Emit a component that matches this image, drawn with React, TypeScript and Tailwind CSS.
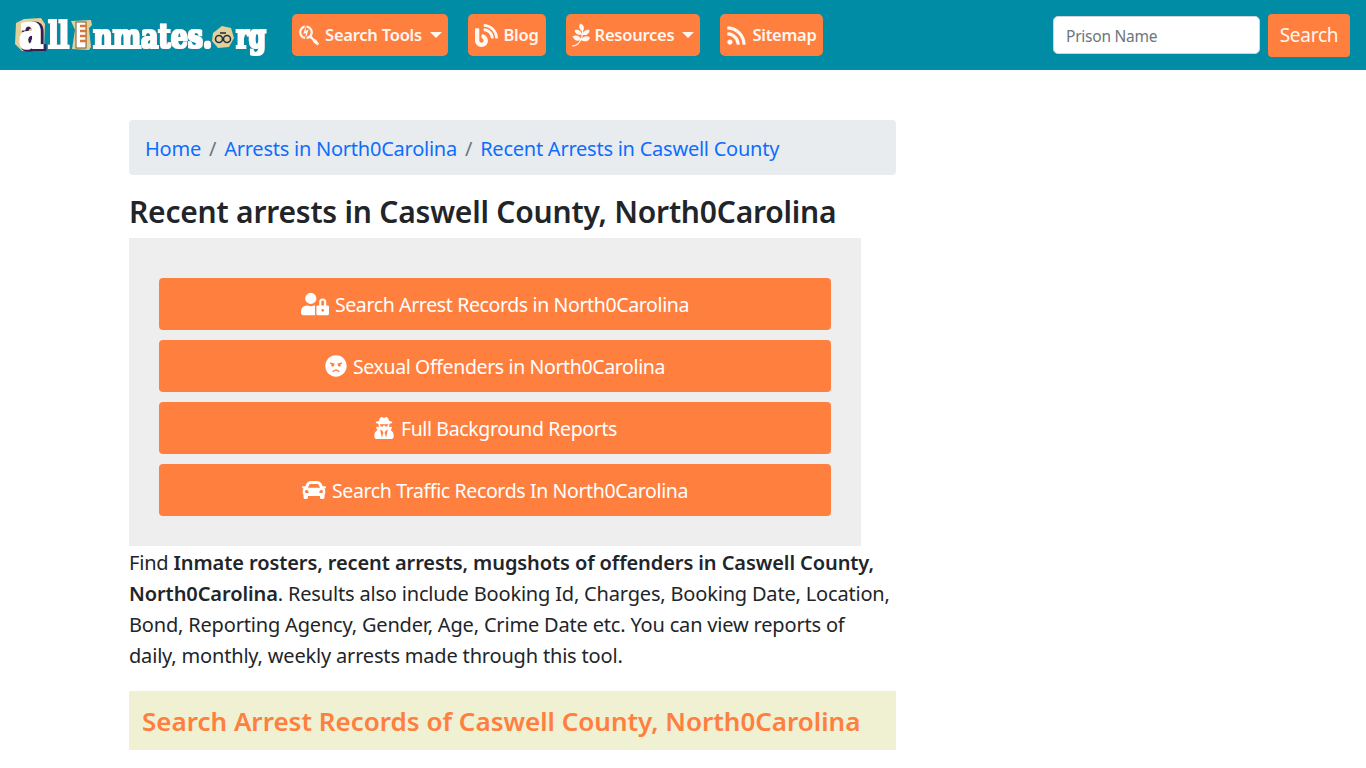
import { FaAngry, FaBlog, FaCar, FaPagelines, FaRss, FaSearchengin, FaUserLock, FaUserSecret } from 'react-icons/fa'
import type { ReactNode } from 'react'

function Logo() {
  return (
    <svg width="254" height="42" viewBox="0 0 254 42" className="shrink-0">
      <defs>
        <filter id="fat" x="-10%" y="-10%" width="120%" height="120%">
          <feMorphology in="SourceGraphic" operator="dilate" radius="0.7" result="body" />
          <feMorphology in="SourceAlpha" operator="dilate" radius="1.3" result="grown" />
          <feFlood floodColor="#5a3d1c" />
          <feComposite in2="grown" operator="in" result="edge" />
          <feMerge>
            <feMergeNode in="edge" />
            <feMergeNode in="body" />
          </feMerge>
        </filter>
        <filter id="fatA" x="-20%" y="-20%" width="140%" height="140%">
          <feMorphology in="SourceGraphic" operator="dilate" radius="1" result="body" />
          <feMorphology in="SourceAlpha" operator="dilate" radius="1.6" result="grown" />
          <feOffset in="grown" dx="1.5" dy="0.5" result="moved" />
          <feFlood floodColor="#3b1a55" />
          <feComposite in2="moved" operator="in" result="edge" />
          <feMerge>
            <feMergeNode in="edge" />
            <feMergeNode in="body" />
          </feMerge>
        </filter>
      </defs>
      <path d="M2 9 L10 5 L27 4 L31 10 L30 36 L8 37 L1 30 Z" fill="#e2cf9a" />
      <path d="M57 7 L77 6 L78 11 L75 14 L77 33 L75 36 L58 35 L61 16 Z" fill="#e2cf9a" />
      <rect x="62" y="8" width="10" height="26" fill="#fff" stroke="#7a5a2c" strokeWidth="1" />
      <path d="M66 12 H73 M66 17 H73 M66 22 H73 M66 27 H73" stroke="#d9783c" strokeWidth="2.4" />
      <path d="M199 19 L208 12 L217 14 L220 24 L215 33 L204 34 L198 27 Z" fill="#e2cf9a" />
      <circle cx="205" cy="25" r="3.5" fill="none" stroke="#234" strokeWidth="1.6" />
      <circle cx="213" cy="25" r="3.5" fill="none" stroke="#234" strokeWidth="1.6" />
      <path d="M206 19 L212 19" stroke="#234" strokeWidth="1.6" />
      <g fontFamily="'DejaVu Serif', serif" fontWeight="700" fill="#ffffff">
        <text x="5" y="34" fontSize="48" textLength="24" lengthAdjust="spacingAndGlyphs" filter="url(#fatA)">a</text>
        <g filter="url(#fat)">
          <text x="34" y="34" fontSize="37" textLength="21" lengthAdjust="spacingAndGlyphs">ll</text>
          <text x="79" y="34" fontSize="34" textLength="119" lengthAdjust="spacingAndGlyphs">nmates.</text>
          <text x="222" y="34" fontSize="34" textLength="30" lengthAdjust="spacingAndGlyphs">rg</text>
        </g>
      </g>
    </svg>
  )
}

function NavButton({ icon, label, caret, w }: { icon: ReactNode; label: string; caret?: boolean; w: string }) {
  return (
    <a className={`flex h-[42px] items-center justify-center gap-[5px] rounded-[5px] bg-[#ff7f3f] text-[16.5px] font-semibold text-[#fff7f0] ${w}`}>
      {icon}
      <span className="pt-[1px]">{label}</span>
      {caret && <span className="ml-[3px] h-0 w-0 border-x-[6px] border-t-[6px] border-x-transparent border-t-[#fff7f0]" />}
    </a>
  )
}

function ActionButton({ icon, label }: { icon: ReactNode; label: string }) {
  return (
    <a className="flex h-[52px] items-center justify-center gap-[6px] rounded-[4px] bg-[#ff7f3f] text-[19.5px] tracking-[-0.019em] text-white">
      {icon}
      <span className="pt-[2px]">{label}</span>
    </a>
  )
}

export default function App() {
  return (
    <div className="min-h-[768px] overflow-hidden bg-white font-['Noto_Sans',sans-serif] tracking-[-0.015em] text-[#212529]">
      <nav className="flex h-[70px] items-center bg-[#008ca5] pl-[14px] pr-[16px]">
        <Logo />
        <div className="ml-[24px] flex gap-[20px]">
          <NavButton w="w-[156px]" icon={<FaSearchengin className="text-[22px]" />} label="Search Tools" caret />
          <NavButton w="w-[78px]" icon={<FaBlog className="text-[23px]" />} label="Blog" />
          <NavButton w="w-[134px]" icon={<FaPagelines className="-mx-[3px] text-[24px]" />} label="Resources" caret />
          <NavButton w="w-[103px]" icon={<FaRss className="text-[21px]" />} label="Sitemap" />
        </div>
        <div className="ml-auto flex items-center gap-[8px]">
          <input
            placeholder="Prison Name"
            className="h-[38px] w-[207px] rounded-[5px] border border-[#ced4da] bg-white px-[12px] pt-[2px] text-[15.5px] placeholder:text-[#6c757d]"
          />
          <a className="flex h-[43px] w-[82px] items-center justify-center rounded-[4px] bg-[#ff7f3f] text-[19px] text-[#fff7f0]">Search</a>
        </div>
      </nav>

      <main className="ml-[129px] w-[767px] pt-[50px]">
        <div className="flex h-[55px] items-center gap-[8px] rounded-[4px] bg-[#e9ecef] px-[16px] pt-[2px] text-[20px] text-[#6c757d]">
          <a className="text-[#0d6efd]">Home</a>
          <span>/</span>
          <a className="text-[#0d6efd]">Arrests in North0Carolina</a>
          <span>/</span>
          <a className="text-[#0d6efd]">Recent Arrests in Caswell County</a>
        </div>

        <h1 className="mt-[16px] h-[47px] text-[30px] leading-[42px] font-semibold tracking-[-0.007em] whitespace-nowrap">Recent arrests in Caswell County, North0Carolina</h1>

        <div className="flex w-[732px] flex-col gap-[10px] bg-[#eeeeee] px-[30px] pt-[40px] pb-[30px]">
          <ActionButton icon={<FaUserLock className="text-[28px]" />} label="Search Arrest Records in North0Carolina" />
          <ActionButton icon={<FaAngry className="text-[22px]" />} label="Sexual Offenders in North0Carolina" />
          <ActionButton icon={<FaUserSecret className="text-[22px]" />} label="Full Background Reports" />
          <ActionButton icon={<FaCar className="text-[24px]" />} label="Search Traffic Records In North0Carolina" />
        </div>

        <p className="pt-[1px] pr-[5px] text-[20px] leading-[31px] tracking-[-0.009em]">
          Find <b className="font-semibold tracking-[-0.0045em]">Inmate rosters, recent arrests, mugshots of offenders in Caswell County, North0Carolina</b>. Results also include Booking Id, Charges, Booking Date, Location, Bond, Reporting Agency, Gender, Age, Crime Date etc. You can view reports of daily, monthly, weekly arrests made through this tool.
        </p>

        <div className="mt-[20px] flex h-[59px] items-center bg-[#f0f0d2] px-[13px] pt-[2px]">
          <h2 className="text-[26px] font-semibold tracking-normal whitespace-nowrap text-[#ff7f3f]">Search Arrest Records of Caswell County, North0Carolina</h2>
        </div>
      </main>
    </div>
  )
}
